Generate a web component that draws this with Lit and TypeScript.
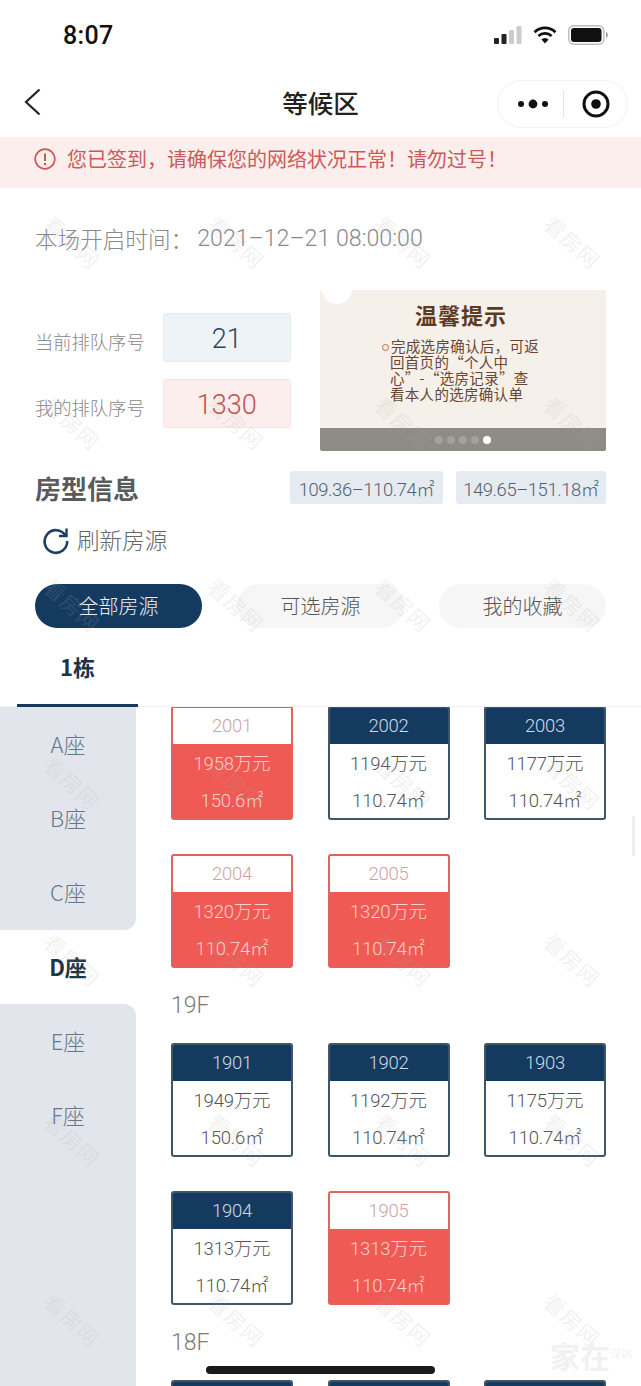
import { LitElement, html, css, svg } from "lit";
import { customElement } from "lit/decorators.js";

type Unit = { no: string; price: string; area: string; sold: boolean };
const u = (no: string, price: string, area: string, sold = false): Unit => ({ no, price, area, sold });

const BANNER = "您已签到\uFF0C请确保您的网络状况正常\uFF01请勿过号\uFF01";
const TIME_LABEL = "本场开启时间\uFF1A";
const TIP_FIRST = "完成选房确认后\uFF0C可返";

const floors: { label: string; units: Unit[] }[] = [
  {
    label: "",
    units: [
      u("2001", "1958万元", "150.6㎡", true),
      u("2002", "1194万元", "110.74㎡"),
      u("2003", "1177万元", "110.74㎡"),
      u("2004", "1320万元", "110.74㎡", true),
      u("2005", "1320万元", "110.74㎡", true),
    ],
  },
  {
    label: "19F",
    units: [
      u("1901", "1949万元", "150.6㎡"),
      u("1902", "1192万元", "110.74㎡"),
      u("1903", "1175万元", "110.74㎡"),
      u("1904", "1313万元", "110.74㎡"),
      u("1905", "1313万元", "110.74㎡", true),
    ],
  },
  {
    label: "18F",
    units: [u("", "", ""), u("", "", ""), u("", "", "")],
  },
];

const marks: [number, number][] = [];
for (const y of [242, 423, 605, 783, 960, 1140, 1320]) {
  for (const x of [72, 236, 403, 572]) marks.push([x, y]);
}

@customElement("app-root")
export class AppRoot extends LitElement {
  static styles = css`
    :host {
      display: block;
      width: 641px;
      height: 1386px;
      font-family: Roboto, "Noto Sans CJK SC", sans-serif;
      font-weight: 300;
      color: #666;
      background: #fff;
    }
    .page {
      position: relative;
      width: 641px;
      height: 1386px;
      overflow: hidden;
      background: #fff;
      display: flex;
      flex-direction: column;
    }
    .status {
      height: 70px;
      flex: none;
      display: flex;
      align-items: center;
      justify-content: space-between;
      padding: 0 33px 0 63px;
      box-sizing: border-box;
    }
    .clock {
      font: 500 25px/1 "Roboto", sans-serif;
      color: #111;
      letter-spacing: 0.3px;
    }
    .status-icons {
      display: flex;
      align-items: center;
      gap: 11px;
    }
    .nav {
      height: 67px;
      flex: none;
      display: grid;
      grid-template-columns: 1fr auto 1fr;
      align-items: center;
      padding: 0 13px;
      box-sizing: border-box;
    }
    .back {
      padding-left: 11px;
    }
    .title {
      font: 500 25.5px/1 "Noto Sans CJK SC", sans-serif;
      color: #222;
      padding-bottom: 3px;
    }
    .capsule {
      justify-self: end;
      width: 131px;
      height: 48px;
      box-sizing: border-box;
      border: 1px solid #f2f2f2;
      border-radius: 24px;
      display: flex;
      align-items: center;
    }
    .cap-l {
      width: 65px;
      display: flex;
      justify-content: flex-end;
      padding-right: 15px;
      box-sizing: border-box;
    }
    .cap-div {
      width: 1px;
      height: 28px;
      background: #e6e6e6;
    }
    .cap-r {
      flex: 1;
      display: flex;
      justify-content: center;
    }
    .banner {
      height: 51px;
      flex: none;
      background: #fbeeed;
      display: flex;
      align-items: center;
      gap: 11px;
      padding: 0 0 8px 34px;
      box-sizing: border-box;
      font: 400 20px/1 "Noto Sans CJK SC", sans-serif;
      color: #cb5a57;
    }
    .time {
      height: 100px;
      flex: none;
      display: flex;
      align-items: center;
      padding-left: 35px;
      font-size: 22.6px;
      color: #8a8a8a;
      box-sizing: border-box;
    }
    .time .lbl {
      margin-right: 4px;
    }
    .time .val {
      font-size: 23.2px;
    }
    .queue {
      display: flex;
      justify-content: space-between;
      padding: 2px 35px 0;
      flex: none;
      height: 161px;
    }
    .q-left {
      padding-top: 23px;
      display: flex;
      flex-direction: column;
      gap: 17px;
    }
    .q-row {
      display: flex;
      align-items: center;
      gap: 18px;
      font: 300 18.3px/1 "Noto Sans CJK SC", sans-serif;
      color: #888;
    }
    .q-label {
      padding-top: 8px;
    }
    .q-box {
      width: 128px;
      height: 49px;
      border-radius: 3px;
      display: flex;
      align-items: center;
      justify-content: center;
      padding-top: 4px;
      font: 300 27px/1 Roboto, sans-serif;
      box-sizing: border-box;
    }
    .q-box.now {
      background: #eef3f8;
      border: 1px solid #e5ebf1;
      color: #2b4658;
    }
    .q-box.mine {
      background: #fdeeee;
      border: 1px solid #f8e4e3;
      color: #c0504e;
    }
    .tip {
      position: relative;
      width: 286px;
      height: 161px;
      background: #f5f0e9;
      border-radius: 2px;
      overflow: hidden;
      display: flex;
      flex-direction: column;
    }
    .tip::before {
      content: "";
      position: absolute;
      left: 2px;
      top: -16px;
      width: 30px;
      height: 30px;
      border-radius: 50%;
      background: #fff;
    }
    .tip-main {
      flex: 1;
      display: flex;
      flex-direction: column;
      align-items: flex-start;
      padding: 11px 0 0 70px;
      color: #6a4632;
      font-family: "Noto Sans CJK SC", sans-serif;
    }
    .tip-title {
      margin-left: 25px;
      font-size: 22px;
      line-height: 26px;
      font-weight: 700;
      color: #5e3a22;
      letter-spacing: 1px;
    }
    .tip-body {
      margin-top: 11px;
      font-size: 14.5px;
      line-height: 16px;
      font-weight: 400;
      white-space: nowrap;
      letter-spacing: 0.3px;
    }
    .tip-dot {
      display: inline-block;
      width: 5px;
      height: 5px;
      margin-right: 2px;
      border: 1.5px solid #c0683a;
      border-radius: 50%;
      vertical-align: 1px;
      margin-left: -8px;
    }
    .tip-band {
      height: 23px;
      flex: none;
      background: #8f8c85;
      display: flex;
      align-items: center;
      justify-content: center;
      gap: 4px;
    }
    .tip-band i {
      width: 8px;
      height: 8px;
      border-radius: 50%;
      background: #a5a29b;
    }
    .tip-band i.on {
      background: #fff;
    }
    .info {
      flex: none;
      display: flex;
      align-items: center;
      justify-content: space-between;
      padding: 20px 35px 0;
      height: 33px;
    }
    .info h2 {
      margin: 0;
      font: 700 26px/1 "Noto Sans CJK SC", sans-serif;
      color: #5a5a5a;
    }
    .tags {
      display: flex;
      gap: 13px;
    }
    .tag {
      height: 33px;
      box-sizing: border-box;
      background: #e6ebf1;
      border-radius: 3px;
      display: flex;
      align-items: center;
      justify-content: center;
      font-size: 18.4px;
      letter-spacing: -0.4px;
      color: #50616f;
    }
    .tag.a {
      width: 153px;
    }
    .tag.b {
      width: 150px;
    }
    .refresh {
      flex: none;
      display: flex;
      align-items: center;
      gap: 6px;
      padding: 19px 0 0 41px;
      height: 34px;
      font: 300 22.6px/1 "Noto Sans CJK SC", sans-serif;
      color: #666;
    }
    .filters {
      flex: none;
      display: flex;
      justify-content: space-between;
      padding: 0 35px;
      margin-top: 27px;
    }
    .pill {
      width: 167px;
      height: 44px;
      border-radius: 22px;
      background: #f6f6f6;
      display: flex;
      align-items: center;
      justify-content: center;
      font: 300 20px/1 "Noto Sans CJK SC", sans-serif;
      color: #555;
    }
    .pill.on {
      background: #153a60;
      color: #e8eef4;
    }
    .buildings {
      flex: none;
      height: 79px;
      display: flex;
      padding-left: 17px;
      border-bottom: 1px solid #f2f2f2;
      box-sizing: border-box;
    }
    .b-tab {
      width: 121px;
      border-bottom: 3px solid #153a60;
      height: 76px;
      display: flex;
      align-items: center;
      justify-content: center;
      font: 700 22px/1 "Noto Sans CJK SC", sans-serif;
      color: #1d3348;
    }
    .body {
      flex: 1;
      min-height: 0;
      display: flex;
      overflow: hidden;
    }
    .side {
      width: 136px;
      flex: none;
      display: flex;
      flex-direction: column;
      font: 300 22px/1 "Noto Sans CJK SC", sans-serif;
      color: #65778a;
    }
    .side-group {
      background: #e2e6ec;
    }
    .side-group.first {
      border-bottom-right-radius: 12px;
      padding-bottom: 1px;
    }
    .side-group.last {
      flex: 1;
      border-top-right-radius: 12px;
    }
    .side-item {
      height: 74px;
      display: flex;
      align-items: center;
      justify-content: center;
      padding-bottom: 3px;
      box-sizing: border-box;
    }
    .side-item.on {
      font-weight: 700;
      color: #1d3348;
    }
    .list {
      flex: 1;
      min-width: 0;
      padding-left: 35px;
      margin-top: -1px;
    }
    .floor-label {
      height: 75px;
      box-sizing: border-box;
      display: flex;
      align-items: center;
      font-size: 23px;
      color: #7a7a7a;
    }
    .grid {
      display: grid;
      grid-template-columns: repeat(3, 122px);
      column-gap: 34.5px;
      row-gap: 34px;
    }
    .card {
      height: 114px;
      box-sizing: border-box;
      border: 2px solid #3f5568;
      border-radius: 3px;
      overflow: hidden;
      display: flex;
      flex-direction: column;
      text-align: center;
      font-size: 18.5px;
      color: #555;
      letter-spacing: -0.2px;
    }
    .card .no {
      height: 36px;
      flex: none;
      background: #153a60;
      color: #cfdbe6;
      display: flex;
      align-items: center;
      justify-content: center;
    }
    .card .val {
      flex: 1;
      display: flex;
      align-items: center;
      justify-content: center;
      padding-bottom: 1px;
    }
    .card.sold {
      border-color: #e2625e;
      background: #ef5a55;
      color: #fbd0cc;
    }
    .card.sold .no {
      background: #fff;
      color: #cfa3a3;
    }
    .wm {
      position: absolute;
      transform: translate(-50%, -50%) rotate(42deg);
      font: 400 21px/1 "Noto Sans CJK SC", sans-serif;
      color: rgba(170, 170, 170, 0.18);
      letter-spacing: 1px;
      white-space: nowrap;
      pointer-events: none;
    }
    .home {
      position: absolute;
      left: 206px;
      top: 1366px;
      width: 229px;
      height: 8px;
      border-radius: 4px;
      background: #1a1a1a;
    }
    .scroll {
      position: absolute;
      left: 632px;
      top: 816px;
      width: 3px;
      height: 40px;
      border-radius: 2px;
      background: #eeeeee;
    }
    .logo {
      position: absolute;
      left: 550px;
      top: 1340px;
      font: 700 30px/1 "Noto Sans CJK SC", sans-serif;
      color: rgba(235, 235, 235, 0.7);
      white-space: nowrap;
    }
    .logo small {
      font-size: 11px;
      font-weight: 400;
      vertical-align: 10px;
    }
  `;

  private icons = {
    signal: svg`<svg width="28" height="18" viewBox="0 0 28 18"><rect x="0" y="12" width="5" height="6" rx="1" fill="#222"/><rect x="7.5" y="8" width="5" height="10" rx="1" fill="#222"/><rect x="15" y="4" width="5" height="14" rx="1" fill="#ccc"/><rect x="22.5" y="0" width="5" height="18" rx="1" fill="#ccc"/></svg>`,
    wifi: svg`<svg width="24" height="18" viewBox="0 0 24 18" fill="none" stroke="#111" stroke-width="2.6"><path d="M1.5 6.2a15 15 0 0 1 21 0"/><path d="M5.4 10a9.6 9.6 0 0 1 13.2 0"/><path d="M12 17.6l-3.6-4a5 5 0 0 1 7.2 0z" fill="#111" stroke="none"/></svg>`,
    battery: svg`<svg width="40" height="20" viewBox="0 0 40 20"><rect x="0.8" y="0.8" width="35" height="18.4" rx="5" fill="none" stroke="#bbb" stroke-width="1.4"/><rect x="3" y="3" width="30.5" height="14" rx="3" fill="#111"/><path d="M38 7v6c1.2-.4 1.8-1.6 1.8-3S39.2 7.4 38 7z" fill="#999"/></svg>`,
    back: svg`<svg width="18" height="28" viewBox="0 0 18 28" fill="none" stroke="#222" stroke-width="2.2"><path d="M15.5 1.5L2 14l13.5 12.5"/></svg>`,
    dots: svg`<svg width="30" height="10" viewBox="0 0 30 10" fill="#111"><circle cx="3" cy="5" r="3"/><circle cx="15" cy="5" r="4.4"/><circle cx="27" cy="5" r="3"/></svg>`,
    target: svg`<svg width="28" height="28" viewBox="0 0 28 28"><circle cx="14" cy="14" r="12" fill="none" stroke="#111" stroke-width="3"/><circle cx="14" cy="14" r="4.8" fill="#111"/></svg>`,
    alert: svg`<svg width="22" height="22" viewBox="0 0 22 22" fill="none" stroke="#cb5a57" stroke-width="1.7"><circle cx="11" cy="11" r="9.8"/><path d="M11 5.5v7.5" stroke-width="2"/><circle cx="11" cy="16" r="1.2" fill="#cb5a57" stroke="none"/></svg>`,
    refresh: svg`<svg width="30" height="30" viewBox="0 0 30 30" fill="none" stroke="#1c3f5f" stroke-width="2.6"><path d="M24.5 10.5A11.3 11.3 0 1 0 26.2 16"/><path d="M25.5 3.5v7.5h-7.5" stroke-width="2.4"/></svg>`,
  };

  private card(x: Unit) {
    return html`<div class="card ${x.sold ? "sold" : ""}">
      <div class="no">${x.no}</div>
      <div class="val">${x.price}</div>
      <div class="val">${x.area}</div>
    </div>`;
  }

  render() {
    return html`<div class="page">
      <div class="status">
        <div class="clock">8:07</div>
        <div class="status-icons">${this.icons.signal}${this.icons.wifi}${this.icons.battery}</div>
      </div>
      <div class="nav">
        <div class="back">${this.icons.back}</div>
        <div class="title">等候区</div>
        <div class="capsule">
          <div class="cap-l">${this.icons.dots}</div>
          <div class="cap-div"></div>
          <div class="cap-r">${this.icons.target}</div>
        </div>
      </div>
      <div class="banner">${this.icons.alert}<span>${BANNER}</span></div>
      <div class="time"><span class="lbl">${TIME_LABEL}</span><span class="val">2021–12–21 08:00:00</span></div>
      <div class="queue">
        <div class="q-left">
          <div class="q-row"><span class="q-label">当前排队序号</span><div class="q-box now">21</div></div>
          <div class="q-row"><span class="q-label">我的排队序号</span><div class="q-box mine">1330</div></div>
        </div>
        <div class="tip">
          <div class="tip-main">
            <div class="tip-title">温馨提示</div>
            <div class="tip-body"><span class="tip-dot"></span>${TIP_FIRST}<br />回首页的“个人中<br />心”-“选房记录”查<br />看本人的选房确认单</div>
          </div>
          <div class="tip-band"><i></i><i></i><i></i><i></i><i class="on"></i></div>
        </div>
      </div>
      <div class="info">
        <h2>房型信息</h2>
        <div class="tags"><div class="tag a">109.36–110.74㎡</div><div class="tag b">149.65–151.18㎡</div></div>
      </div>
      <div class="refresh">${this.icons.refresh}<span>刷新房源</span></div>
      <div class="filters">
        <div class="pill on">全部房源</div>
        <div class="pill">可选房源</div>
        <div class="pill">我的收藏</div>
      </div>
      <div class="buildings"><div class="b-tab">1栋</div></div>
      <div class="body">
        <div class="side">
          <div class="side-group first">
            <div class="side-item">A座</div>
            <div class="side-item">B座</div>
            <div class="side-item">C座</div>
          </div>
          <div class="side-item on">D座</div>
          <div class="side-group last">
            <div class="side-item">E座</div>
            <div class="side-item">F座</div>
          </div>
        </div>
        <div class="list">
          ${floors.map(
            (f) => html`${f.label ? html`<div class="floor-label">${f.label}</div>` : ""}
              <div class="grid">${f.units.map((x) => this.card(x))}</div>`
          )}
        </div>
      </div>
      ${marks.map(([x, y]) => html`<div class="wm" style="left:${x}px;top:${y}px">看房网</div>`)}
      <div class="scroll"></div>
      <div class="home"></div>
      <div class="logo">家在<small>深圳</small></div>
    </div>`;
  }
}
